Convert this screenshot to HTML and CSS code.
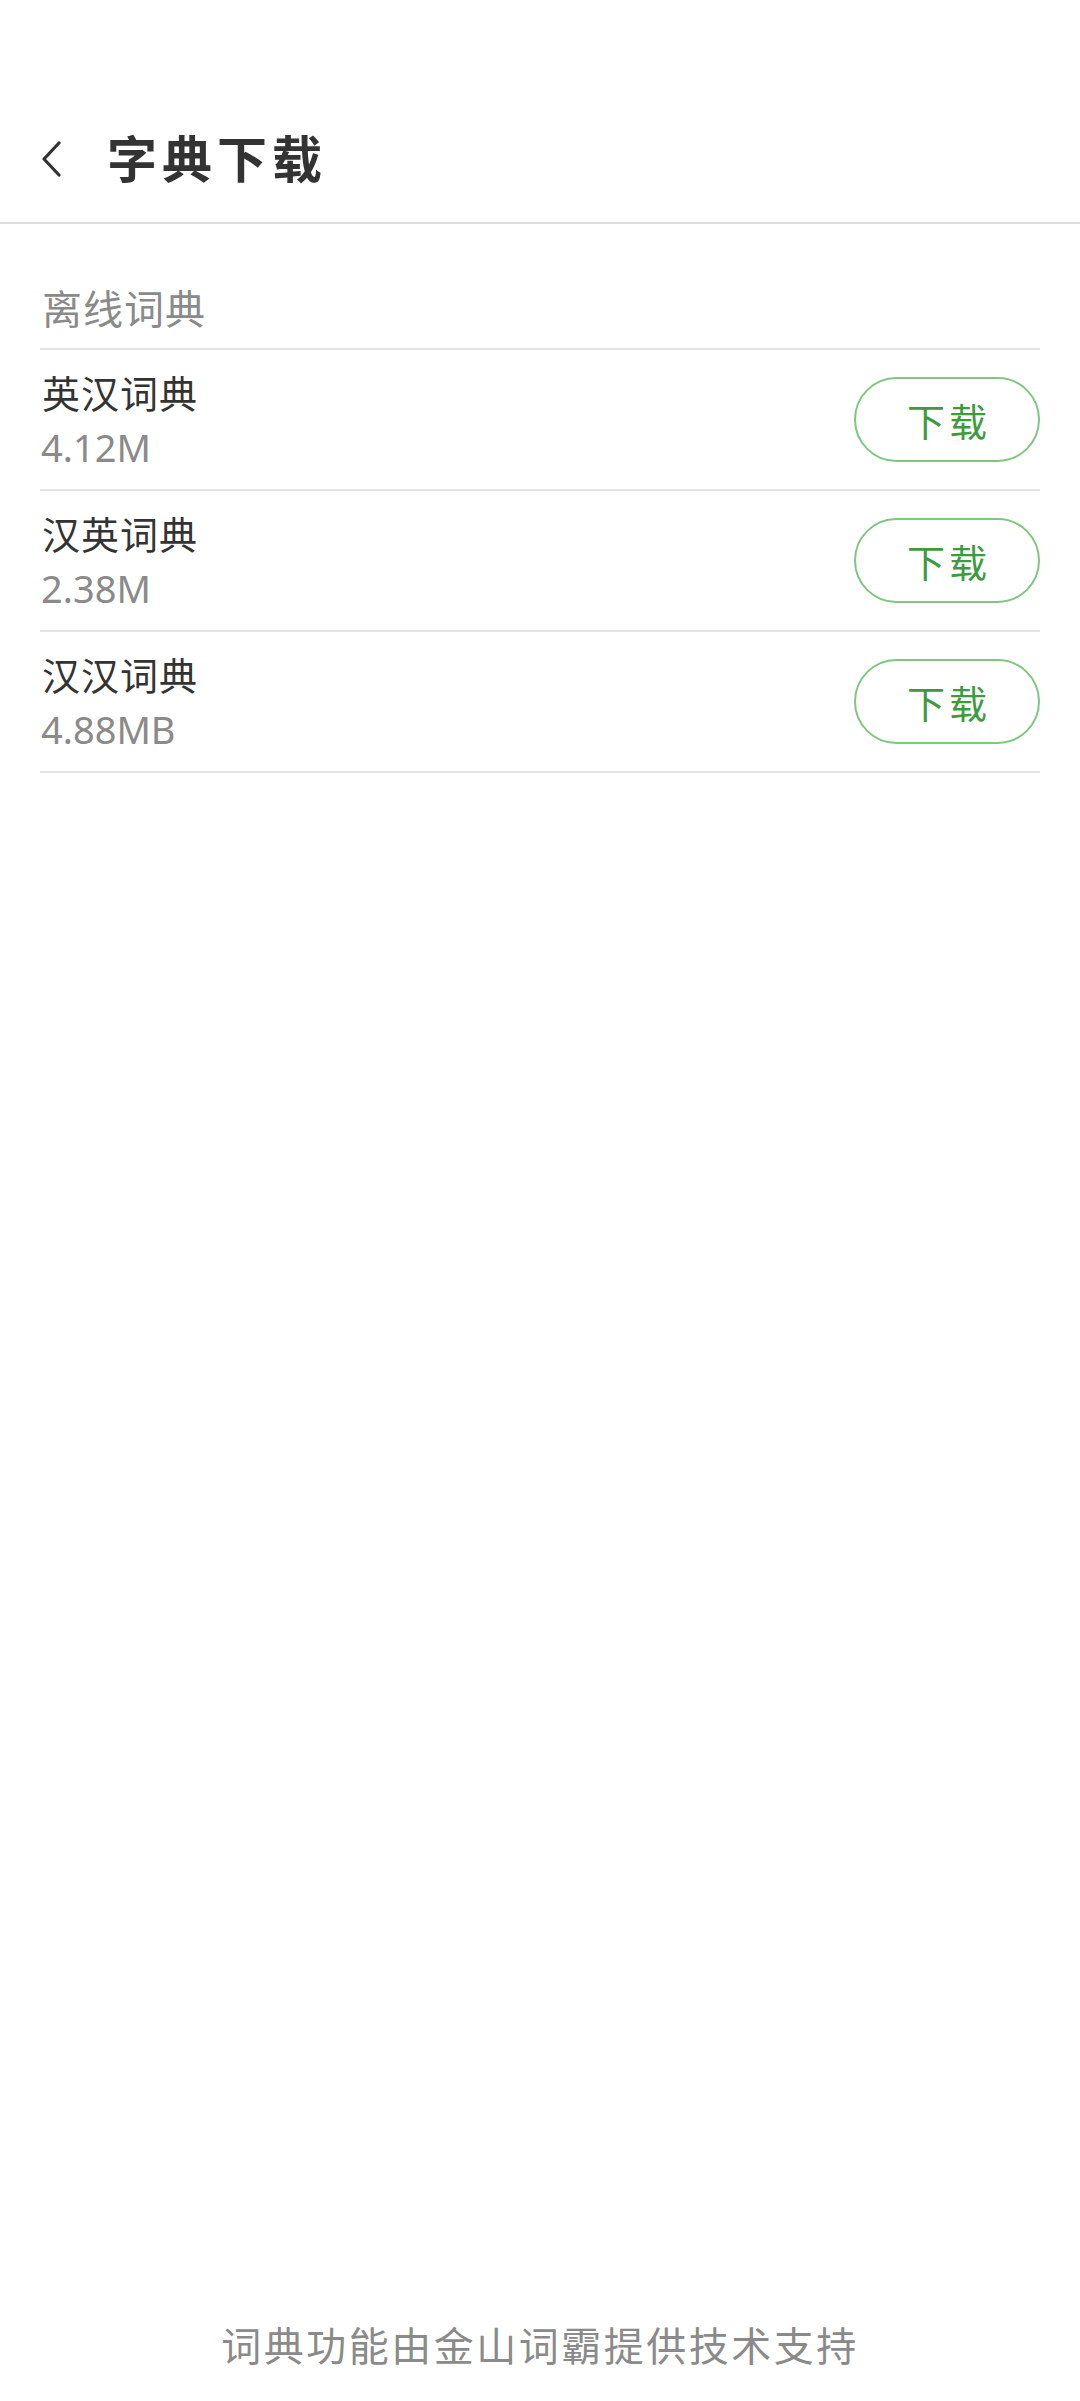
FILE: index.html
```html
<!DOCTYPE html>
<html lang="zh-CN">
<head>
    <meta charset="UTF-8">
    <meta name="viewport" content="width=device-width, initial-scale=1.0">
    <title>字典下载</title>
    <link rel="stylesheet" href="styles.css">
</head>
<body>
    <div class="page">
        <div class="status-bar"></div>

        <!-- Header -->
        <div class="header">
            <svg class="back" width="22" height="36" viewBox="0 0 22 36">
                <path d="M18 2 L3 18 L18 34" fill="none" stroke="#333" stroke-width="3.2" stroke-linecap="round" stroke-linejoin="round"/>
            </svg>
            <h1>字典下载</h1>
        </div>

        <!-- Offline dictionaries -->
        <div class="content">
            <div class="section-title">离线词典</div>
            <ul class="dict-list">
                <li class="dict-item">
                    <div class="dict-info">
                        <div class="dict-name">英汉词典</div>
                        <div class="dict-size">4.12M</div>
                    </div>
                    <button class="download">下载</button>
                </li>
                <li class="dict-item">
                    <div class="dict-info">
                        <div class="dict-name">汉英词典</div>
                        <div class="dict-size">2.38M</div>
                    </div>
                    <button class="download">下载</button>
                </li>
                <li class="dict-item">
                    <div class="dict-info">
                        <div class="dict-name">汉汉词典</div>
                        <div class="dict-size">4.88MB</div>
                    </div>
                    <button class="download">下载</button>
                </li>
            </ul>
        </div>

        <!-- Footer -->
        <div class="footer">词典功能由金山词霸提供技术支持</div>
    </div>
</body>
</html>
```

FILE: styles.css
```css
body { margin: 0; padding: 0; background-color: #fff; font-family: "Noto Sans", "Noto Sans CJK SC", sans-serif; color: #333; }
.page { min-height: 100vh; display: flex; flex-direction: column; }
.status-bar { height: 96px; }
.header { height: 126px; display: flex; align-items: center; border-bottom: 2px solid #dcdcdc; }
.header .back { margin-left: 41px; margin-right: 44px; }
.header h1 { margin: 0; font-size: 50px; font-weight: bold; letter-spacing: 5px; color: #333; line-height: 1; }
.content { padding: 0 40px; }
.section-title { padding: 60px 0 14px 2px; font-size: 40px; line-height: 50px; color: #8a8a8a; letter-spacing: 1px; }
.dict-list { list-style-type: none; margin: 0; padding: 0; border-top: 2px solid #e3e3e3; }
.dict-item { display: flex; align-items: center; justify-content: space-between; height: 139px; border-bottom: 2px solid #e3e3e3; }
.dict-name { font-size: 38px; line-height: 48px; color: #333; letter-spacing: 1px; padding-left: 2px; }
.dict-size { font-size: 38px; line-height: 48px; color: #8a8a8a; margin-top: 6px; padding-left: 1px; }
.download { width: 186px; height: 85px; border: 2px solid #80c680; border-radius: 43px; background-color: #fff; color: #3e9a3e; font-family: "Noto Sans CJK SC", sans-serif; font-size: 38px; letter-spacing: 4px; padding: 0 0 0 4px; }
.footer { margin-top: auto; padding-bottom: 30px; text-align: center; font-size: 40px; line-height: 50px; color: #8a8a8a; letter-spacing: 2.5px; }
```
